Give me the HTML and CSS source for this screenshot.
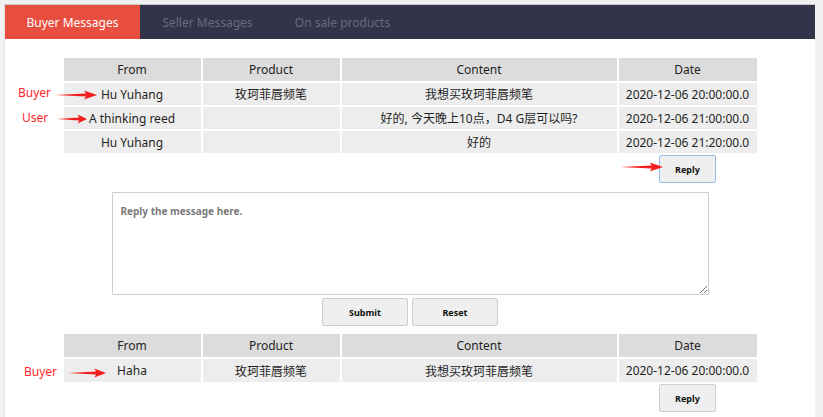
FILE: index.html
```html
<!DOCTYPE html>
<html lang="en">
<head>
<meta charset="utf-8">
<title>Messages</title>
<link rel="stylesheet" href="styles.css">
</head>
<body>
<div class="page">
  <nav class="tabs">
    <div class="tab active">Buyer Messages</div>
    <div class="tab">Seller Messages</div>
    <div class="tab">On sale products</div>
  </nav>
  <main class="content">
    <section class="thread">
      <table class="msgs">
        <colgroup><col class="c-from"><col class="c-prod"><col class="c-content"><col class="c-date"></colgroup>
        <thead>
          <tr><th>From</th><th>Product</th><th>Content</th><th>Date</th></tr>
        </thead>
        <tbody>
          <tr><td>Hu Yuhang</td><td>玫珂菲唇频笔</td><td>我想买玫珂菲唇频笔</td><td>2020-12-06 20:00:00.0</td></tr>
          <tr><td>A thinking reed</td><td></td><td>好的, 今天晚上10点，D4 G层可以吗?</td><td>2020-12-06 21:00:00.0</td></tr>
          <tr><td>Hu Yuhang</td><td></td><td>好的</td><td>2020-12-06 21:20:00.0</td></tr>
        </tbody>
      </table>
      <div class="reply-row"><div class="reply-cell"><button class="btn reply focused" type="button">Reply</button></div></div>
    </section>

    <form class="reply-form">
      <textarea class="reply-text" placeholder="Reply the message here."></textarea>
      <div class="form-actions">
        <button class="btn form-btn" type="button">Submit</button>
        <button class="btn form-btn" type="reset">Reset</button>
      </div>
    </form>

    <section class="thread second">
      <table class="msgs">
        <colgroup><col class="c-from"><col class="c-prod"><col class="c-content"><col class="c-date"></colgroup>
        <thead>
          <tr><th>From</th><th>Product</th><th>Content</th><th>Date</th></tr>
        </thead>
        <tbody>
          <tr><td>Haha</td><td>玫珂菲唇频笔</td><td>我想买玫珂菲唇频笔</td><td>2020-12-06 20:00:00.0</td></tr>
        </tbody>
      </table>
      <div class="reply-row"><div class="reply-cell"><button class="btn reply" type="button">Reply</button></div></div>
    </section>

    <div class="note note-buyer1">Buyer</div>
    <svg class="arrow arrow-buyer1" viewBox="0 0 42 10" preserveAspectRatio="none"><path d="M0 5 L31 3.6 L29 0.6 L42 5 L29 9.4 L31 6.4 Z"/></svg>
    <div class="note note-user">User</div>
    <svg class="arrow arrow-user" viewBox="0 0 42 10" preserveAspectRatio="none"><path d="M0 5 L31 3.6 L29 0.6 L42 5 L29 9.4 L31 6.4 Z"/></svg>
    <svg class="arrow arrow-reply" viewBox="0 0 42 10" preserveAspectRatio="none"><path d="M0 5 L31 3.6 L29 0.6 L42 5 L29 9.4 L31 6.4 Z"/></svg>
    <div class="note note-buyer2">Buyer</div>
    <svg class="arrow arrow-buyer2" viewBox="0 0 42 10" preserveAspectRatio="none"><path d="M0 5 L31 3.6 L29 0.6 L42 5 L29 9.4 L31 6.4 Z"/></svg>
  </main>
</div>
</body>
</html>
```

FILE: styles.css
```css
* { box-sizing: border-box; }

html, body {
  margin: 0;
  padding: 0;
}

body {
  background: #f1f1f1;
  font-family: "Noto Sans", "Noto Sans CJK SC", sans-serif;
  color: #1f1f1f;
  padding: 4px 8px 0 4px;
}

.page {
  background: #ffffff;
  border-top: 1px solid #c9c9c9;
  border-left: 1px solid #e2e2e2;
  min-height: 413px;
}

.tabs {
  display: flex;
  height: 34px;
  background: #33344a;
}

.tab {
  width: 135px;
  display: flex;
  align-items: center;
  justify-content: center;
  font-size: 12px;
  color: #696a7f;
}

.tab.active {
  background: #e84e3f;
  color: #ffffff;
}

.content {
  position: relative;
  padding-top: 17px;
  display: flex;
  flex-direction: column;
  align-items: center;
}

.thread {
  width: 697px;
}

.msgs {
  width: 697px;
  table-layout: fixed;
  border-collapse: separate;
  border-spacing: 2px;
  font-size: 12px;
}

.c-from, .c-prod { width: 137px; }
.c-content { width: 275px; }
.c-date { width: 138px; }

.msgs th {
  background: #dcdcdc;
  font-weight: normal;
  height: 23px;
  padding: 0;
  text-align: center;
  color: #1f1f1f;
}

.msgs td {
  background: #ededed;
  height: 22px;
  padding: 0;
  text-align: center;
  white-space: nowrap;
}

.second .msgs td { height: 23px; }

.reply-row {
  display: flex;
  justify-content: flex-end;
  padding-right: 2px;
}

.reply-cell {
  width: 138px;
  display: flex;
  justify-content: center;
}

.btn {
  font-family: "Noto Sans", sans-serif;
  font-weight: bold;
  font-size: 9px;
  color: #111;
  background: #efefef;
  border: 1px solid #cdcdcd;
  border-radius: 2px;
  padding: 0;
  margin: 0;
}

.reply {
  width: 57px;
  height: 28px;
}

.reply.focused {
  border-color: #92bde9;
}

.reply-form {
  margin-top: 9px;
  display: flex;
  flex-direction: column;
  align-items: center;
}

.reply-text {
  display: block;
  width: 597px;
  height: 103px;
  margin: 0;
  border: 1px solid #cfcfcf;
  border-radius: 1px;
  padding: 11px 8px;
  font-family: "Noto Sans", sans-serif;
  font-size: 10px;
  font-weight: bold;
  line-height: 14px;
  resize: both;
  color: #333;
}

.reply-text::placeholder {
  color: #7a7a7a;
  font-weight: bold;
}

.form-actions {
  display: flex;
  gap: 4px;
  margin-top: 3px;
}

.form-btn {
  width: 86px;
  height: 28px;
}

.second {
  margin-top: 6px;
}

.note {
  position: absolute;
  font-size: 12px;
  line-height: 16px;
  color: #ff2626;
}

.arrow {
  position: absolute;
  height: 10px;
  fill: #f41d1d;
}

.note-buyer1 { left: 13px; top: 46px; }
.arrow-buyer1 { left: 50px; top: 51px; width: 42px; }

.note-user { left: 17px; top: 71px; }
.arrow-user { left: 52px; top: 75px; width: 30px; }

.arrow-reply { left: 615px; top: 123px; width: 43px; }

.note-buyer2 { left: 19px; top: 325px; }
.arrow-buyer2 { left: 63px; top: 329px; width: 38px; }
```
